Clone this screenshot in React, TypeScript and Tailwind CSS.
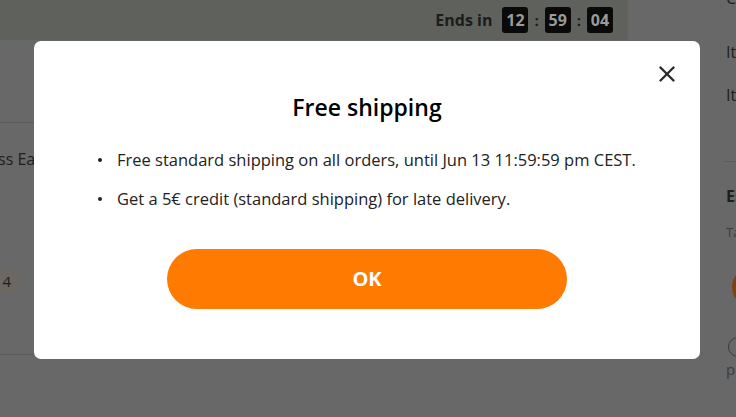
import { X } from 'lucide-react';

function TimeBox({ value }: { value: string }) {
  return (
    <span className="flex h-[26px] w-[26px] items-center justify-center rounded-[3px] bg-[#0a0a0a] text-[16px] font-bold text-[#9a9a9a]">
      {value}
    </span>
  );
}

export default function App() {
  return (
    <div
      className="relative h-[417px] w-[736px] overflow-hidden bg-[#686868]"
      style={{ fontFamily: '"Open Sans", "Noto Sans", sans-serif' }}
    >
      {/* page behind the dialog */}
      <div className="flex h-full">
        <div className="flex w-[628px] shrink-0 flex-col">
          <div className="flex h-[40px] items-center justify-end gap-[6px] bg-[#5f625c] pr-[15px]">
            <span className="mr-[4px] text-[16px] font-bold text-[#1c1c1c]">Ends in</span>
            <TimeBox value="12" />
            <span className="text-[15px] font-bold text-[#1c1c1c]">:</span>
            <TimeBox value="59" />
            <span className="text-[15px] font-bold text-[#1c1c1c]">:</span>
            <TimeBox value="04" />
          </div>
          <div className="mt-[82px] border-t border-[#5c5c5c]" />
          <div className="mt-[24px] -ml-[2px] whitespace-nowrap text-[16px] leading-[24px] text-[#1e1e1e]">ss Earrings</div>
          <div className="mt-[98px] flex h-[24px] w-[18px] items-center justify-end rounded-[4px] bg-[#6c6761] pr-[7px] text-[15px] text-[#1e1e1e]">
            4
          </div>
          <div className="mt-[61px] border-t border-[#5c5c5c]" />
        </div>
        <div className="flex min-w-0 flex-1 flex-col whitespace-nowrap pl-[98px] text-[16px] leading-[24px] text-[#1e1e1e]">
          <div className="-mt-[14px]">Cart</div>
          <div className="mt-[30px]">Items</div>
          <div className="mt-[19px]">Items</div>
          <div className="mt-[54px] -ml-[2px] border-t border-[#5c5c5c]" />
          <div className="mt-[22px] font-bold">Est</div>
          <div className="mt-[14px] text-[13px] leading-[20px] text-[#3c3c3c]">Taxes</div>
          <div className="mt-[25px] ml-[6px] h-[40px] w-[40px] shrink-0 rounded-full bg-[#7a4410]" />
          <div className="mt-[30px] ml-[2px] h-[20px] w-[20px] shrink-0 rounded-full border border-[#3a3a3a]" />
          <div className="text-[15px] leading-[24px] text-[#3c3c3c]">pay</div>
        </div>
      </div>

      {/* dialog */}
      <div className="absolute left-[34px] top-[41px] flex h-[318px] w-[666px] flex-col items-center rounded-[7px] bg-white">
        <button className="absolute right-[20px] top-[20px] text-[#2a2a2a]">
          <X size={26} strokeWidth={2.2} />
        </button>
        <h2 className="mt-[50px] text-[23px] font-semibold leading-[32px] text-black">Free shipping</h2>
        <ul className="mt-[25px] flex w-full flex-col gap-[15px] pl-[64px] text-[16.5px] leading-[24px] text-[#222]">
          <li className="flex items-center">
            <span className="mr-[15px] h-[4px] w-[4px] rounded-full bg-[#222]" />
            Free standard shipping on all orders, until Jun 13 11:59:59 pm CEST.
          </li>
          <li className="flex items-center">
            <span className="mr-[15px] h-[4px] w-[4px] rounded-full bg-[#222]" />
            Get a 5€ credit (standard shipping) for late delivery.
          </li>
        </ul>
        <button className="mt-[38px] flex h-[60px] w-[400px] items-center justify-center rounded-full bg-[#ff7a00] text-[20px] font-bold text-white">
          OK
        </button>
      </div>
    </div>
  );
}
